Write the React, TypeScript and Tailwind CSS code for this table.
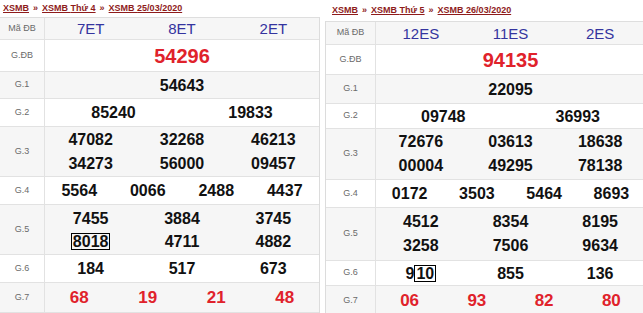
import React from "react";

type Cell = string | { pre?: string; boxed: string; post?: string };

type RowDef = {
  label: string;
  h: number;
  gray: boolean;
  cols: number;
  items: Cell[];
  kind: "code" | "special" | "num" | "g7";
  lh?: number;
};

const Crumb = ({ day, date }: { day: string; date: string }) => (
  <div className="h-[22px] flex items-center pl-[3px] text-[9px] font-bold text-[#8e1b1b] whitespace-nowrap">
    <span className="underline">XSMB</span>
    <span className="mx-[4px] text-[#8e1b1b]">»</span>
    <span className="underline">XSMB {day}</span>
    <span className="mx-[4px] text-[#8e1b1b]">»</span>
    <span className="underline">XSMB {date}</span>
  </div>
);

const renderCell = (c: Cell) => {
  if (typeof c === "string") return c;
  return (
    <>
      {c.pre}
      <span className="border border-black px-[1px] leading-[15px] inline-block">{c.boxed}</span>
      {c.post}
    </>
  );
};

const kindClass: Record<RowDef["kind"], string> = {
  code: "text-[15px] text-[#34349f] font-normal",
  special: "text-[20px] text-[#e0222b] font-bold",
  num: "text-[16px] text-[#111] font-bold",
  g7: "text-[17px] text-[#e0222b] font-bold",
};

const gridCols: Record<number, string> = {
  1: "grid-cols-1",
  2: "grid-cols-2",
  3: "grid-cols-3",
  4: "grid-cols-4",
};

const Table = ({ rows, labelW }: { rows: RowDef[]; labelW: number }) => (
  <div className="flex flex-col border-t border-[#dedede]">
    {rows.map((r, i) => (
      <div
        key={i}
        className={`flex border-b border-[#e2e2e2] ${r.gray ? "bg-[#f6f6f6]" : "bg-white"}`}
        style={{ height: r.h }}
      >
        <div
          className="shrink-0 flex items-center justify-center text-[9px] text-[#6a6a6a] border-r border-[#e2e2e2]"
          style={{ width: labelW }}
        >
          {r.label}
        </div>
        <div className={`flex-1 grid ${gridCols[r.cols]} content-center ${kindClass[r.kind]}`}>
          {r.items.map((c, j) => (
            <div
              key={j}
              className="text-center"
              style={{ lineHeight: `${r.lh ?? r.h}px` }}
            >
              {renderCell(c)}
            </div>
          ))}
        </div>
      </div>
    ))}
  </div>
);

const leftRows: RowDef[] = [
  { label: "Mã ĐB", h: 22, gray: true, cols: 3, items: ["7ET", "8ET", "2ET"], kind: "code" },
  { label: "G.ĐB", h: 32, gray: false, cols: 1, items: ["54296"], kind: "special" },
  { label: "G.1", h: 27, gray: true, cols: 1, items: ["54643"], kind: "num" },
  { label: "G.2", h: 28, gray: false, cols: 2, items: ["85240", "19833"], kind: "num" },
  {
    label: "G.3",
    h: 50,
    gray: true,
    cols: 3,
    items: ["47082", "32268", "46213", "34273", "56000", "09457"],
    kind: "num",
    lh: 24,
  },
  { label: "G.4", h: 28, gray: false, cols: 4, items: ["5564", "0066", "2488", "4437"], kind: "num" },
  {
    label: "G.5",
    h: 50,
    gray: true,
    cols: 3,
    items: ["7455", "3884", "3745", { boxed: "8018" }, "4711", "4882"],
    kind: "num",
    lh: 23,
  },
  { label: "G.6", h: 28, gray: false, cols: 3, items: ["184", "517", "673"], kind: "num" },
  { label: "G.7", h: 30, gray: true, cols: 4, items: ["68", "19", "21", "48"], kind: "g7" },
];

const rightRows: RowDef[] = [
  { label: "Mã ĐB", h: 23, gray: true, cols: 3, items: ["12ES", "11ES", "2ES"], kind: "code" },
  { label: "G.ĐB", h: 30, gray: false, cols: 1, items: ["94135"], kind: "special" },
  { label: "G.1", h: 29, gray: true, cols: 1, items: ["22095"], kind: "num" },
  { label: "G.2", h: 25, gray: false, cols: 2, items: ["09748", "36993"], kind: "num" },
  {
    label: "G.3",
    h: 51,
    gray: true,
    cols: 3,
    items: ["72676", "03613", "18638", "00004", "49295", "78138"],
    kind: "num",
    lh: 24,
  },
  { label: "G.4", h: 28, gray: false, cols: 4, items: ["0172", "3503", "5464", "8693"], kind: "num" },
  {
    label: "G.5",
    h: 53,
    gray: true,
    cols: 3,
    items: ["4512", "8354", "8195", "3258", "7506", "9634"],
    kind: "num",
    lh: 24,
  },
  { label: "G.6", h: 25, gray: false, cols: 3, items: [{ pre: "9", boxed: "10" }, "855", "136"], kind: "num" },
  { label: "G.7", h: 30, gray: true, cols: 4, items: ["06", "93", "82", "80"], kind: "g7" },
];

export default function App() {
  return (
    <div
      className="w-[643px] h-[313px] overflow-hidden bg-white flex"
      style={{ fontFamily: '"Liberation Sans", Arial, sans-serif' }}
    >
      <div className="w-[320px] shrink-0 flex flex-col">
        <Crumb day="Thứ 4" date="25/03/2020" />
        <div className="border-r border-[#dcdcdc]">
          <Table rows={leftRows} labelW={45} />
        </div>
      </div>
      <div className="w-[5px] shrink-0" />
      <div className="w-[320px] shrink-0 flex flex-col">
        <div className="pl-[4px] -mb-px">
          <Crumb day="Thứ 5" date="26/03/2020" />
        </div>
        <div className="border-l border-[#dcdcdc]">
          <Table rows={rightRows} labelW={50} />
        </div>
      </div>
    </div>
  );
}
